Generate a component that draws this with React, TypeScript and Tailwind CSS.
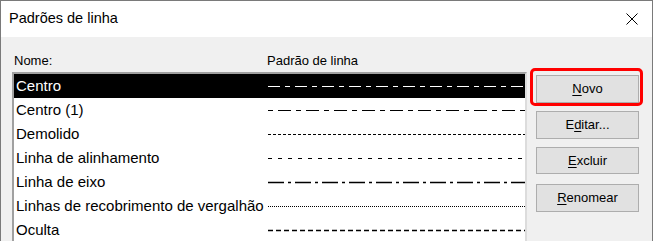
import React from "react";

type LinePattern = {
  name: string;
  dash: string;
  width?: number;
};

const patterns: LinePattern[] = [
  { name: "Centro", dash: "12 5 5 5" },
  { name: "Centro (1)", dash: "5 5 13 5" },
  { name: "Demolido", dash: "3 2" },
  { name: "Linha de alinhamento", dash: "4 6" },
  { name: "Linha de eixo", dash: "16 4 3 4", width: 1.6 },
  { name: "Linhas de recobrimento de vergalhão", dash: "1 1" },
  { name: "Oculta", dash: "5 3", width: 1.4 },
];

const buttons = [
  { pre: "", key: "N", post: "ovo", mt: "mt-0" },
  { pre: "E", key: "d", post: "itar...", mt: "mt-[8px]" },
  { pre: "", key: "E", post: "xcluir", mt: "mt-[8px]" },
  { pre: "", key: "R", post: "enomear", mt: "mt-[10px]" },
];

function PatternLine({ dash, width = 1, color }: { dash: string; width?: number; color: string }) {
  return (
    <svg width="257" height="4" className="block">
      <line x1="0" y1="2.5" x2="257" y2="2.5" stroke={color} strokeWidth={width} strokeDasharray={dash} />
    </svg>
  );
}

export default function App() {
  return (
    <div
      className="w-[653px] h-[241px] overflow-hidden border-x border-t border-[#7a7a7a] bg-[#f0f0f0] text-black"
      style={{ fontFamily: '"Liberation Sans", Arial, sans-serif' }}
    >
      <div className="flex h-[36px] items-center justify-between bg-white pl-[8px] pr-[14px]">
        <span className="text-[14.5px]">Padrões de linha</span>
        <svg width="12" height="12" viewBox="0 0 12 12" className="block">
          <path d="M0.5 0.5 L11.5 11.5 M11.5 0.5 L0.5 11.5" stroke="#000" strokeWidth="1" fill="none" />
        </svg>
      </div>

      <div className="flex pl-[11px] pt-[14px]">
        <div className="w-[515px]">
          <div className="grid h-[20px] grid-cols-[253px_1fr] items-center pl-[2px] text-[13px]">
            <span>Nome:</span>
            <span>Padrão de linha</span>
          </div>
          <div className="mt-[1px] h-[200px] border-l-2 border-t-2 border-r-2 border-l-[#a0a0a0] border-t-[#a0a0a0] border-r-[#dcdcdc] bg-white">
            {patterns.map((p, i) => {
              const selected = i === 0;
              return (
                <div
                  key={p.name}
                  className={`grid h-[24px] grid-cols-[254px_1fr] items-center text-[15px] ${
                    selected ? "bg-black text-white" : "text-black"
                  }`}
                >
                  <span className="whitespace-nowrap pl-[2px]">{p.name}</span>
                  <PatternLine dash={p.dash} width={p.width} color={selected ? "#fff" : "#000"} />
                </div>
              );
            })}
          </div>
        </div>

        <div className="ml-[9px] mt-[24px] flex flex-col">
          {buttons.map((b, i) => (
            <div key={b.post} className={`relative ${b.mt}`}>
              <button
                type="button"
                className={`flex w-[103px] items-center justify-center border border-[#adadad] bg-[#e1e1e1] text-[13px] text-black ${
                  i === 1 || i === 3 ? "h-[28px]" : i === 2 ? "h-[27px]" : "h-[28px]"
                }`}
              >
                {b.pre}
                <span className="underline underline-offset-2">{b.key}</span>
                {b.post}
              </button>
              {i === 0 && (
                <div className="pointer-events-none absolute left-[-6px] top-[-7px] h-[38px] w-[113px] rounded-[5px] border-[3px] border-[#ff0000]" />
              )}
            </div>
          ))}
        </div>
      </div>
    </div>
  );
}
